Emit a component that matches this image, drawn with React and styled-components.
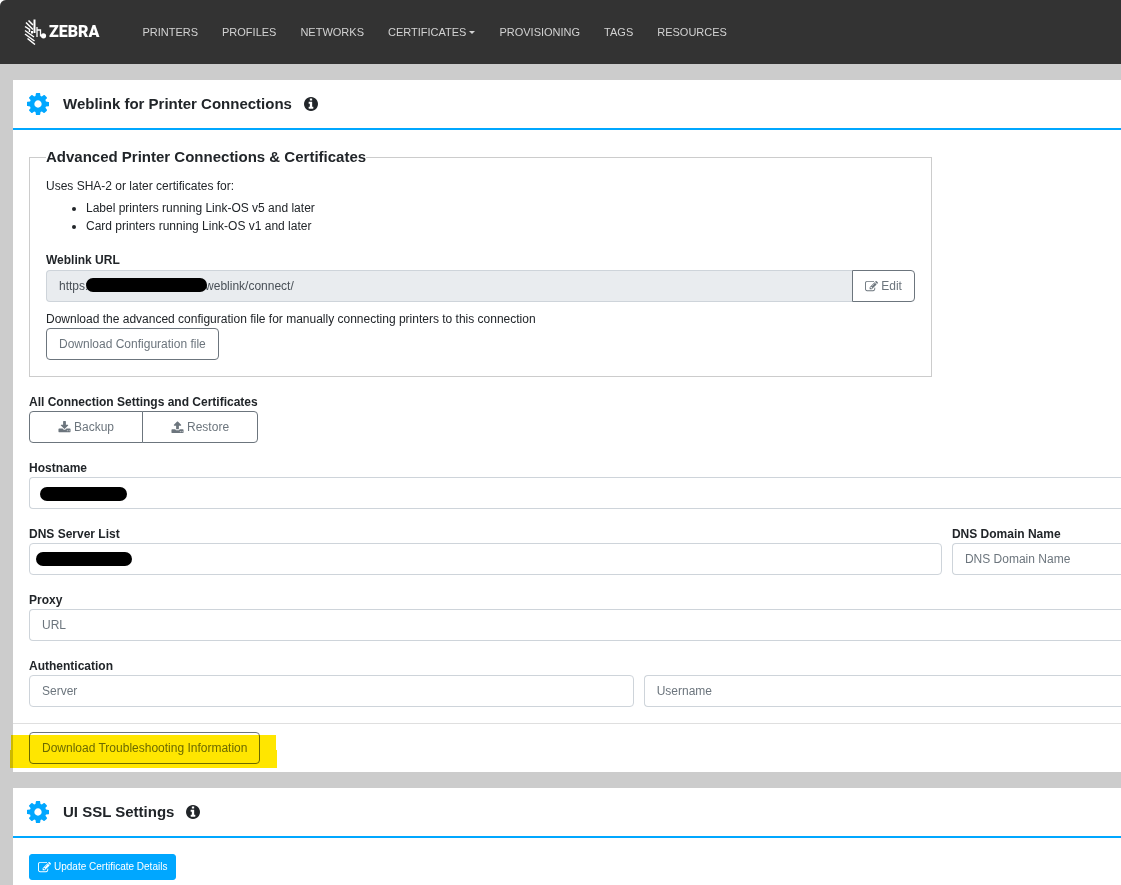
import React, { useState } from 'react';
import styled, { createGlobalStyle, css } from 'styled-components';

const GlobalStyle = createGlobalStyle`
  *, *::before, *::after { box-sizing: border-box; }
  body {
    margin: 0;
    background: #fff;
    color: #212529;
    font-family: "Liberation Sans", Arial, sans-serif;
    font-size: 12px;
    line-height: 18px;
  }
  input, button { font: inherit; }
`;

const Page = styled.div`
  min-height: 100vh;
  background: #ccc;
  border-top-left-radius: 6px;
  overflow: hidden;
`;

const TopBar = styled.header`
  display: flex;
  align-items: center;
  gap: 43px;
  height: 64px;
  padding-left: 24px;
  background: #333;
`;

const Brand = styled.a`
  display: flex;
  align-items: center;
  gap: 2px;
  color: #fff;
  text-decoration: none;
`;

const BrandName = styled.span`
  font-family: Roboto, "Open Sans", sans-serif;
  font-size: 16px;
  font-weight: 900;
  line-height: 24px;
`;

const Nav = styled.nav`
  display: flex;
  gap: 24px;
`;

const NavLink = styled.a`
  display: flex;
  align-items: center;
  gap: 3px;
  color: #d2d2d2;
  font-size: 11px;
  text-decoration: none;
`;

const Caret = styled.span`
  border-top: 3px solid;
  border-left: 3px solid transparent;
  border-right: 3px solid transparent;
`;

const Content = styled.main`
  display: flex;
  flex-direction: column;
  gap: 16px;
  padding: 16px 0 0 13px;
`;

const Card = styled.section`
  background: #fff;
`;

const CardHeader = styled.div`
  display: flex;
  align-items: center;
  gap: 14px;
  height: 50px;
  padding-left: 14px;
  border-bottom: 2px solid #00a7ff;
`;

const CardTitle = styled.h2`
  display: flex;
  align-items: center;
  gap: 12px;
  margin: 0;
  font-size: 15px;
  line-height: 24px;
`;

const CardBody = styled.div`
  display: flex;
  flex-direction: column;
  gap: 16px;
  padding: 16px 0 16px 16px;
`;

const CardFooter = styled.div`
  padding: 8px 16px;
  border-top: 1px solid #dfdfdf;
`;

const Icon = styled.svg`
  flex: none;
  width: ${p => p.$size}px;
  height: ${p => p.$size}px;
  fill: ${p => p.$color || 'currentColor'};
`;

const Row = styled.div`
  display: grid;
  grid-template-columns: ${p => p.$columns || '1fr'};
  gap: 10px;
`;

const Fieldset = styled.fieldset`
  min-width: 0;
  margin: 0 10px 0 0;
  padding: 9px 16px 16px;
  border: 1px solid #ccc;
`;

const Legend = styled.legend`
  padding: 0;
  font-size: 15px;
  font-weight: bold;
  line-height: 22px;
`;

const Text = styled.p`
  margin: 0;
`;

const List = styled.ul`
  margin: 4px 0 16px;
  padding-left: 40px;
`;

const Label = styled.label`
  display: block;
  font-weight: bold;
`;

const GroupLabel = styled.div`
  font-weight: bold;
`;

const InputWrap = styled.div`
  position: relative;
  flex: 1;
`;

// $bleed: the field runs into the right edge of the window
const Input = styled.input`
  display: block;
  width: 100%;
  height: 32px;
  padding: 0 12px;
  border: 1px solid #ced4da;
  border-radius: 4px;
  background: #fff;
  color: #495057;
  outline: none;
  &::placeholder { color: #6c757d; opacity: 1; }
  &:read-only { background: #e9ecef; }
  ${p => (p.$bleed || p.$grouped) && css`
    border-right: 0;
    border-top-right-radius: 0;
    border-bottom-right-radius: 0;
  `}
`;

const Redaction = styled.span`
  position: absolute;
  top: ${p => p.$top || 10}px;
  left: ${p => p.$left}px;
  width: ${p => p.$width}px;
  height: 14px;
  border-radius: 7px;
  background: #000;
`;

const InputGroup = styled.div`
  display: flex;
  margin: 1px 0 8px;
`;

const Button = styled.button`
  display: inline-flex;
  align-items: center;
  justify-content: center;
  gap: 3px;
  height: 32px;
  padding: 0 12px;
  border: 1px solid #6c757d;
  border-radius: 4px;
  background: #fff;
  color: #6c757d;
  cursor: pointer;
`;

const AddonButton = styled(Button)`
  border-top-left-radius: 0;
  border-bottom-left-radius: 0;
`;

const PrimaryButton = styled(Button)`
  height: 26px;
  padding: 0 8px;
  border-color: #00a7ff;
  border-radius: 3px;
  background: #00a7ff;
  color: #fff;
  font-size: 10px;
`;

const ButtonGroup = styled.div`
  display: flex;
  button { padding: 0 28px; }
  button:first-child { border-radius: 4px 0 0 4px; }
  button:last-child { border-radius: 0 4px 4px 0; margin-left: -1px; }
`;

const Marked = styled.div`
  position: relative;
  width: fit-content;
`;

const Marker = styled.svg`
  position: absolute;
  top: 3px;
  left: -19px;
  width: 267px;
  height: 33px;
  fill: #ffe600;
  mix-blend-mode: multiply;
  pointer-events: none;
`;

const COG = 'M1152 896q0-106-75-181t-181-75-181 75-75 181 75 181 181 75 181-75 75-181zm512-109v222q0 12-8 23t-20 13l-185 28q-19 54-39 91 35 50 107 138 10 12 10 25t-9 23q-27 37-99 108t-94 71q-12 0-26-9l-138-108q-44 23-91 38-16 136-29 186-7 28-36 28h-222q-14 0-24.5-8.5t-11.5-21.5l-28-184q-49-16-90-37l-141 107q-10 9-25 9-14 0-25-11-126-114-165-168-7-10-7-23 0-12 8-23 15-21 51-66.5t54-70.5q-27-50-41-99l-183-27q-13-2-21-12.5t-8-23.5v-222q0-12 8-23t19-13l186-28q14-46 39-92-40-57-107-138-10-12-10-24 0-10 9-23 26-36 98.500-107.5t94.500-71.500q13 0 26 10l138 107q44-23 91-38 16-136 29-186 7-28 36-28h222q14 0 24.500 8.500t11.500 21.500l28 184q49 16 90 37l142-107q9-9 24-9 13 0 25 10 129 119 165 170 7 8 7 22 0 12-8 23-15 21-51 66.500t-54 70.500q26 50 41 98l183 28q13 2 21 12.500t8 23.500z';
const INFO = 'M1152 1376v-160q0-14-9-23t-23-9h-96v-512q0-14-9-23t-23-9h-320q-14 0-23 9t-9 23v160q0 14 9 23t23 9h96v320h-96q-14 0-23 9t-9 23v160q0 14 9 23t23 9h448q14 0 23-9t9-23zm-128-896v-160q0-14-9-23t-23-9h-192q-14 0-23 9t-9 23v160q0 14 9 23t23 9h192q14 0 23-9t9-23zm640 416q0 209-103 385.500t-279.500 279.500-385.500 103-385.500-103-279.500-279.500-103-385.500 103-385.500 279.500-279.500 385.500-103 385.500 103 279.500 279.500 103 385.500z';
const DOWNLOAD = 'M1344 1344q0-26-19-45t-45-19-45 19-19 45 19 45 45 19 45-19 19-45zm256 0q0-26-19-45t-45-19-45 19-19 45 19 45 45 19 45-19 19-45zm128-224v320q0 40-28 68t-68 28h-1472q-40 0-68-28t-28-68v-320q0-40 28-68t68-28h465l135 136q58 56 136 56t136-56l136-136h464q40 0 68 28t28 68zm-325-569q17 41-14 70l-448 448q-18 19-45 19t-45-19l-448-448q-31-29-14-70 17-39 59-39h256v-448q0-26 19-45t45-19h256q26 0 45 19t19 45v448h256q42 0 59 39z';
const UPLOAD = 'M1344 1472q0-26-19-45t-45-19-45 19-19 45 19 45 45 19 45-19 19-45zm256 0q0-26-19-45t-45-19-45 19-19 45 19 45 45 19 45-19 19-45zm128-224v320q0 40-28 68t-68 28h-1472q-40 0-68-28t-28-68v-320q0-40 28-68t68-28h427q21 56 70.500 92t110.500 36h256q61 0 110.500-36t70.500-92h427q40 0 68 28t28 68zm-325-648q-17 40-59 40h-256v448q0 26-19 45t-45 19h-256q-26 0-45-19t-19-45v-448h-256q-42 0-59-40-17-39 14-69l448-448q18-19 45-19t45 19l448 448q31 30 14 69z';
const EDIT = 'M888 1184l116-116-152-152-116 116v56h96v96h56zm440-720q-16-16-33 1l-350 350q-17 17-1 33t33-1l350-350q17-17 1-33zm80 594v190q0 119-84.500 203.500t-203.500 84.500h-832q-119 0-203.500-84.500t-84.500-203.500v-832q0-119 84.500-203.500t203.500-84.500h832q63 0 117 25 15 7 18 23 3 17-9 29l-49 49q-14 14-32 8-23-6-45-6h-832q-66 0-113 47t-47 113v832q0 66 47 113t113 47h832q66 0 113-47t47-113v-126q0-13 9-22l64-64q15-15 35-7t20 29zm-96-738l288 288-672 672h-288v-288zm444 132l-92 92-288-288 92-92q28-28 68-28t68 28l152 152q28 28 28 68t-28 68z';

const Glyph = ({ path, size = 13, color, box = '0 0 1792 1792' }) => (
  <Icon viewBox={box} $size={size} $color={color} aria-hidden="true">
    <path d={path} />
  </Icon>
);

const ZebraHead = () => (
  <svg width="23" height="26" viewBox="0 0 23 26" fill="none" stroke="#fff" strokeWidth="1.5" aria-hidden="true">
    <path d="M4.500 1.500L9 6M2 3.500L9 10.500M1 7.500L5.500 10.500V13M1 11.500L10 18M1 15L10.500 22M3.500 19.500L11 25.500" />
    <path d="M10.500 0.500V14M8 12V14.500" strokeWidth="2" />
    <path d="M13 8V18M13 11H16.500V17.500" strokeWidth="1.300" />
    <circle cx="19.500" cy="16.800" r="2.600" fill="#fff" stroke="none" />
  </svg>
);

const links = ['Printers', 'Profiles', 'Networks', 'Certificates', 'Provisioning', 'Tags', 'Resources'];

const Heading = ({ children }) => (
  <CardHeader>
    <Glyph path={COG} size={22} color="#00a7ff" box="128 128 1536 1536" />
    <CardTitle>
      {children}
      <Glyph path={INFO} size={14} box="128 128 1536 1536" />
    </CardTitle>
  </CardHeader>
);

const App = () => {
  const [form, setForm] = useState({ host: '', dns: '', domain: '', proxy: '', server: '', user: '' });
  const bind = name => ({
    id: name,
    value: form[name],
    onChange: e => setForm({ ...form, [name]: e.target.value }),
  });

  return (
    <Page>
      <GlobalStyle />
      <TopBar>
        <Brand href="#">
          <ZebraHead />
          <BrandName>ZEBRA</BrandName>
        </Brand>
        <Nav>
          {links.map(link => (
            <NavLink href="#" key={link}>
              {link.toUpperCase()}
              {link === 'Certificates' && <Caret />}
            </NavLink>
          ))}
        </Nav>
      </TopBar>

      <Content>
        <Card>
          <Heading>Weblink for Printer Connections</Heading>
          <CardBody>
            <Row $columns="27fr 5fr">
              <Fieldset>
                <Legend>Advanced Printer Connections &amp; Certificates</Legend>
                <Text>Uses SHA-2 or later certificates for:</Text>
                <List>
                  <li>Label printers running Link-OS v5 and later</li>
                  <li>Card printers running Link-OS v1 and later</li>
                </List>
                <Label htmlFor="weblink">Weblink URL</Label>
                <InputGroup>
                  <InputWrap>
                    <Input id="weblink" readOnly $grouped value={`https:${'\u00a0'.repeat(35)}weblink/connect/`} />
                    <Redaction $top={8} $left={40} $width={121} />
                  </InputWrap>
                  <AddonButton type="button"><Glyph path={EDIT} />Edit</AddonButton>
                </InputGroup>
                <Text>Download the advanced configuration file for manually connecting printers to this connection</Text>
                <Button type="button">Download Configuration file</Button>
              </Fieldset>
            </Row>

            <div>
              <GroupLabel id="backup-label">All Connection Settings and Certificates</GroupLabel>
              <ButtonGroup role="group" aria-labelledby="backup-label">
                <Button type="button"><Glyph path={DOWNLOAD} />Backup</Button>
                <Button type="button"><Glyph path={UPLOAD} />Restore</Button>
              </ButtonGroup>
            </div>

            <div>
              <Label htmlFor="host">Hostname</Label>
              <InputWrap>
                <Input {...bind('host')} $bleed />
                <Redaction $left={11} $width={87} />
              </InputWrap>
            </div>

            <Row $columns="27fr 5fr">
              <div>
                <Label htmlFor="dns">DNS Server List</Label>
                <InputWrap>
                  <Input {...bind('dns')} />
                  <Redaction $top={9} $left={7} $width={96} />
                </InputWrap>
              </div>
              <div>
                <Label htmlFor="domain">DNS Domain Name</Label>
                <Input {...bind('domain')} placeholder="DNS Domain Name" $bleed />
              </div>
            </Row>

            <div>
              <Label htmlFor="proxy">Proxy</Label>
              <Input {...bind('proxy')} placeholder="URL" $bleed />
            </div>

            <div>
              <Label htmlFor="server">Authentication</Label>
              <Row $columns="19fr 15fr">
                <Input {...bind('server')} placeholder="Server" />
                <Input {...bind('user')} placeholder="Username" aria-label="Username" $bleed />
              </Row>
            </div>
          </CardBody>
          <CardFooter>
            <Marked>
              <Button type="button">Download Troubleshooting Information</Button>
              <Marker viewBox="0 0 267 33" aria-hidden="true">
                <path d="M1 0H266V15H267V33H0V15H1z" />
              </Marker>
            </Marked>
          </CardFooter>
        </Card>

        <Card>
          <Heading>UI SSL Settings</Heading>
          <CardBody>
            <div>
              <PrimaryButton type="button"><Glyph path={EDIT} />Update Certificate Details</PrimaryButton>
            </div>
          </CardBody>
        </Card>
      </Content>
    </Page>
  );
};

export default App;
